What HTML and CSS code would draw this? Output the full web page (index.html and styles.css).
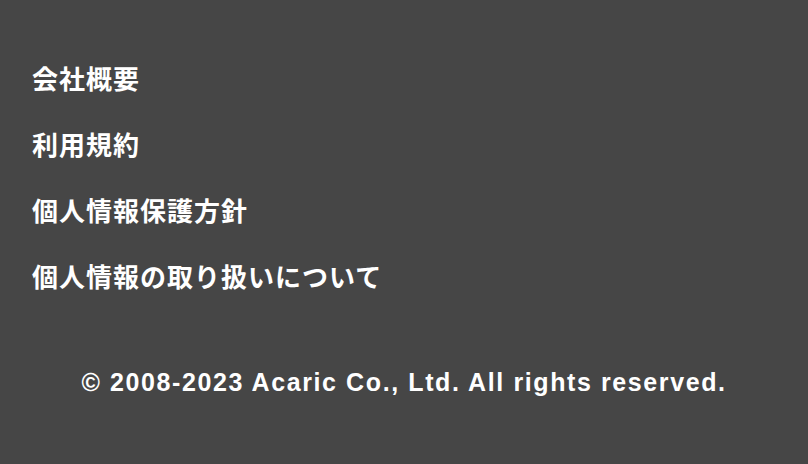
FILE: index.html
```html
<!DOCTYPE html>
<html lang="ja">
<head>
<meta charset="utf-8">
<link rel="stylesheet" href="styles.css">
</head>
<body>
<footer class="footer">
  <ul class="links">
    <li><a href="#">会社概要</a></li>
    <li><a href="#">利用規約</a></li>
    <li><a href="#">個人情報保護方針</a></li>
    <li><a href="#">個人情報の取り扱いについて</a></li>
  </ul>
  <p class="copy">© 2008-2023 Acaric Co., Ltd. All rights reserved.</p>
</footer>
</body>
</html>
```
FILE: styles.css
```css
html, body {
  margin: 0;
  padding: 0;
  background: #464646;
  height: 100%;
}
.footer {
  padding: 59px 32px 0 32px;
  font-family: "Noto Sans CJK JP", "Liberation Sans", sans-serif;
  color: #fff;
}
.links {
  list-style: none;
  margin: 0;
  padding: 0;
  display: flex;
  flex-direction: column;
  gap: 28px;
}
.links li {
  line-height: 38px;
  height: 38px;
}
.links a {
  color: #fff;
  text-decoration: none;
  font-weight: 700;
  font-size: 26px;
  letter-spacing: 1px;
}
.copy {
  margin: 73px 0 0 0;
  text-align: center;
  font-family: "Liberation Sans", Arial, sans-serif;
  font-weight: 700;
  font-size: 25px;
  letter-spacing: 1.6px;
  color: #fff;
}
```
